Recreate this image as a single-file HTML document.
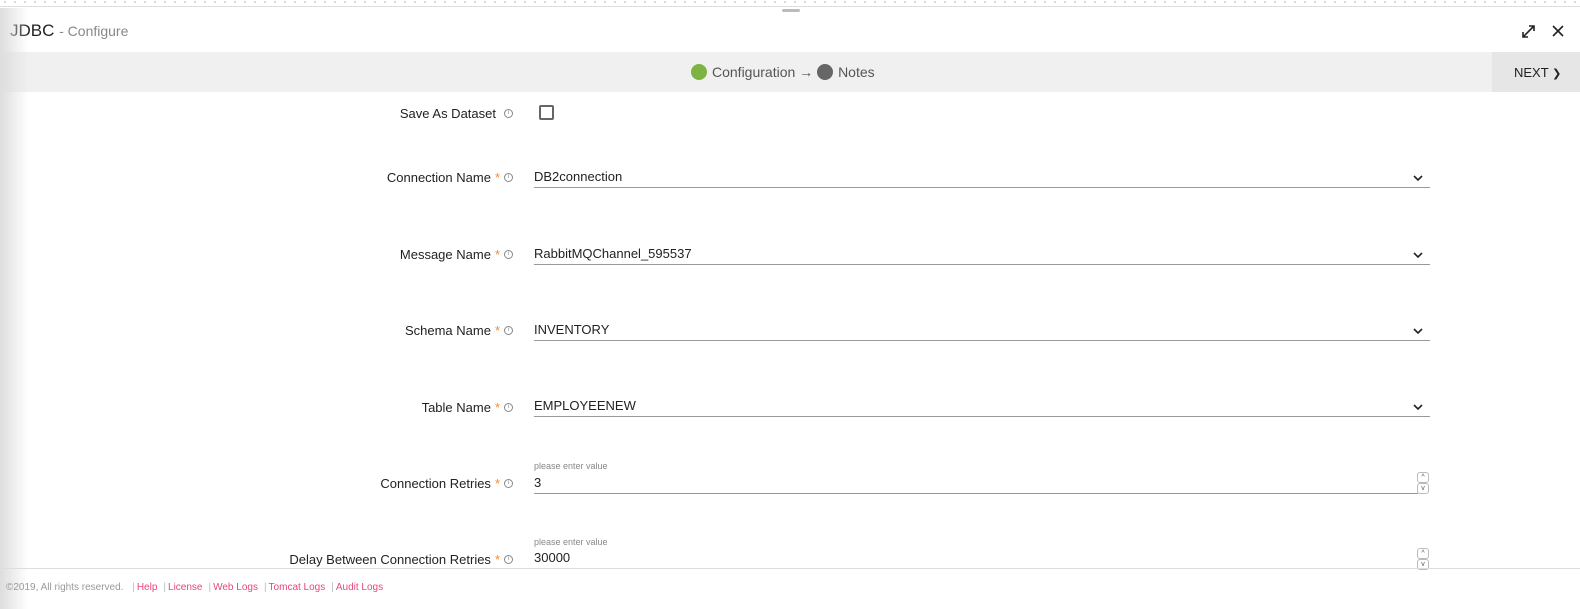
<!DOCTYPE html>
<html><head><meta charset="utf-8"><style>
*{box-sizing:border-box;margin:0;padding:0}
body{width:1580px;height:609px;overflow:hidden;background:#fff;font-family:"Liberation Sans","DejaVu Sans",sans-serif;color:#222;position:relative}
.abs{position:absolute}
.top{left:0;top:0;width:1580px;height:7px;border-bottom:1px solid #ddd;background-image:radial-gradient(circle,#ccc 0.8px,transparent 1px);background-size:10px 6px;background-position:0 -1px}
.handle{left:782px;top:9px;width:18px;height:3px;background:#bbb;border-radius:2px}
.shadow{left:0;top:8px;width:28px;height:601px;background:linear-gradient(to right,#ddd,rgba(255,255,255,0));}
.title{left:10px;top:21px;font-size:17px;color:#222}
.title span{font-size:14px;color:#888}
.bar{left:0;top:52px;width:1580px;height:40px;background:#f0f0f0}
.next{left:1492px;top:52px;width:88px;height:40px;background:#e6e6e6;font-size:13px;color:#222;line-height:42px;padding-left:22px}
.steps{left:691px;top:64px;font-size:14px;color:#555;display:flex;align-items:center}
.dot{width:16px;height:16px;border-radius:50%;display:inline-block;margin-right:5px}
.lbl{right:1080px;font-size:13px;color:#222;text-align:right;white-space:nowrap}
.star{color:#f08a3c;margin-left:4px}
.info{position:absolute;left:504px;width:9px;height:9px;border:1px solid #888;border-radius:50%;font-size:6px;line-height:7px;text-align:center;color:#888}
.inp{left:534px;width:896px;border-bottom:1px solid #999;font-size:13px;height:20px;padding-top:1px}
.chev{position:absolute;right:7px;top:7px}
.ph{left:534px;font-size:9px;color:#888}
.spin{left:1417px;width:12px;height:11px;border:1px solid #bbb;border-radius:3px;font-size:7px;text-align:center;line-height:9px;color:#555}
.foot{left:0;top:568px;width:1580px;border-top:1px solid #ddd}
.ftxt{left:6px;top:582px;font-size:10px;color:#999}
.ftxt a{color:#e8467c;text-decoration:none}
.ftxt i{font-style:normal;color:#bbb;margin:0 2px 0 6px}
</style></head><body>
<div class="abs top"></div>
<div class="abs handle"></div>
<div class="abs title">JDBC <span>- Configure</span></div>
<svg class="abs" style="left:1521px;top:24px" width="15" height="15" viewBox="0 0 15 15" fill="none" stroke="#222" stroke-width="1.6"><path d="M2 13L13 2M8 2h5v5M2 8v5h5"/></svg>
<svg class="abs" style="left:1552px;top:25px" width="12" height="12" viewBox="0 0 12 12" stroke="#222" stroke-width="1.6"><path d="M1 1L11 11M11 1L1 11"/></svg>
<div class="abs bar"></div>
<div class="abs steps"><span class="dot" style="background:#7cb342"></span>Configuration&nbsp;→&nbsp;<span class="dot" style="background:#666"></span>Notes</div>
<div class="abs next">NEXT <span style="font-size:11px">&#x276F;</span></div>
<div class="abs shadow"></div>

<div class="abs lbl" style="top:106px;right:1084px">Save As Dataset</div><div class="info" style="top:109px">i</div>
<div class="abs" style="left:539px;top:105px;width:15px;height:15px;border:2px solid #666;border-radius:2px"></div>

<div class="abs lbl" style="top:170px">Connection Name<span class="star">*</span></div><div class="info" style="top:173px">i</div>
<div class="abs inp" style="top:168px">DB2connection<svg class="chev" width="10" height="7" viewBox="0 0 10 7"><path d="M1 1l4 4 4-4" stroke="#222" stroke-width="1.6" fill="none"/></svg></div>

<div class="abs lbl" style="top:247px">Message Name<span class="star">*</span></div><div class="info" style="top:250px">i</div>
<div class="abs inp" style="top:245px">RabbitMQChannel_595537<svg class="chev" width="10" height="7" viewBox="0 0 10 7"><path d="M1 1l4 4 4-4" stroke="#222" stroke-width="1.6" fill="none"/></svg></div>

<div class="abs lbl" style="top:323px">Schema Name<span class="star">*</span></div><div class="info" style="top:326px">i</div>
<div class="abs inp" style="top:321px">INVENTORY<svg class="chev" width="10" height="7" viewBox="0 0 10 7"><path d="M1 1l4 4 4-4" stroke="#222" stroke-width="1.6" fill="none"/></svg></div>

<div class="abs lbl" style="top:400px">Table Name<span class="star">*</span></div><div class="info" style="top:403px">i</div>
<div class="abs inp" style="top:397px">EMPLOYEENEW<svg class="chev" width="10" height="7" viewBox="0 0 10 7"><path d="M1 1l4 4 4-4" stroke="#222" stroke-width="1.6" fill="none"/></svg></div>

<div class="abs ph" style="top:461px">please enter value</div>
<div class="abs lbl" style="top:476px">Connection Retries<span class="star">*</span></div><div class="info" style="top:479px">i</div>
<div class="abs inp" style="top:474px;width:884px">3</div>
<div class="abs spin" style="top:472px">^</div><div class="abs spin" style="top:483px">v</div>

<div class="abs ph" style="top:537px">please enter value</div>
<div class="abs lbl" style="top:552px">Delay Between Connection Retries<span class="star">*</span></div><div class="info" style="top:555px">i</div>
<div class="abs" style="left:534px;top:550px;font-size:13px">30000</div>
<div class="abs spin" style="top:548px">^</div><div class="abs spin" style="top:559px">v</div>

<div class="abs foot"></div>
<div class="abs ftxt">©2019, All rights reserved. <i>|</i><a>Help</a><i>|</i><a>License</a><i>|</i><a>Web Logs</a><i>|</i><a>Tomcat Logs</a><i>|</i><a>Audit Logs</a></div>
</body></html>
